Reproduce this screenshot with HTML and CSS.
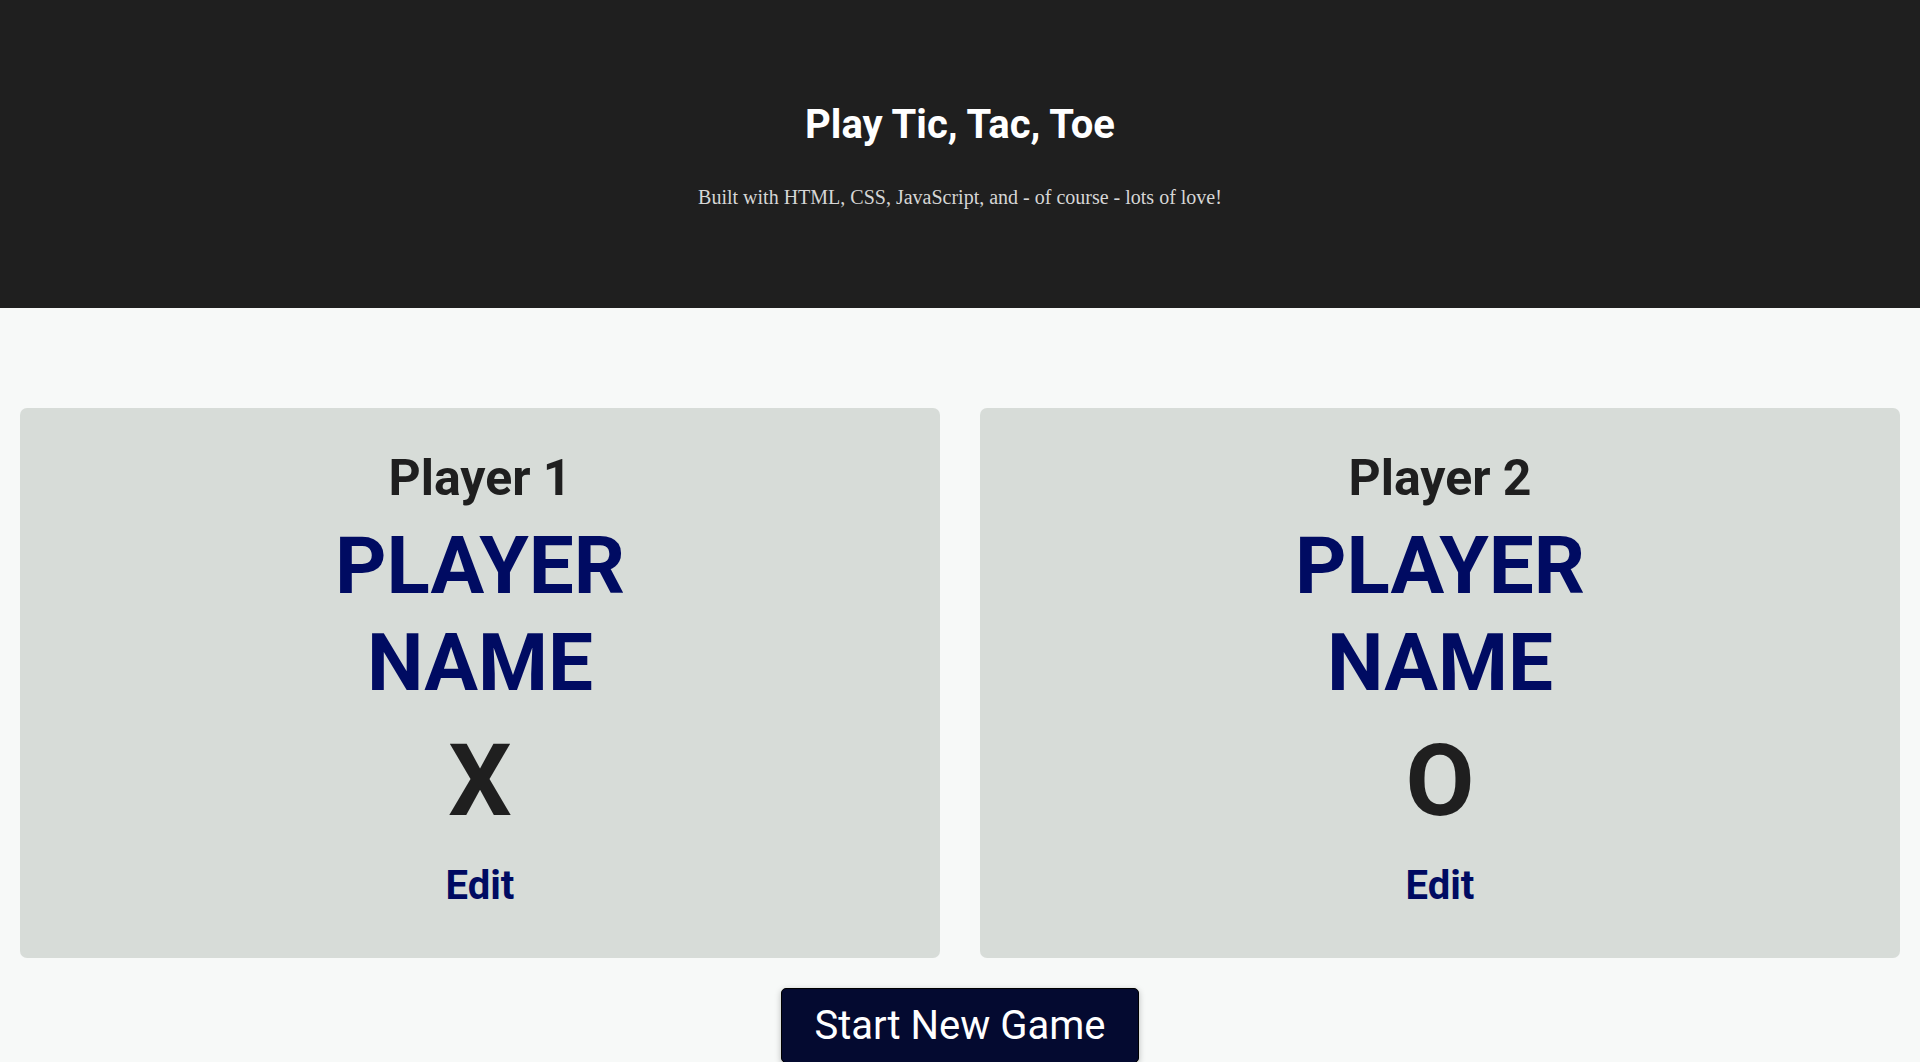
FILE: index.html
```html
<!DOCTYPE html>
<html lang="en">
<head>
<meta charset="utf-8">
<title>Tic Tac Toe</title>
<link rel="stylesheet" href="styles.css">
</head>
<body>
  <header class="main-header">
    <h1 class="title">Play Tic, Tac, Toe</h1>
    <p class="subtitle">Built with HTML, CSS, JavaScript, and - of course - lots of love!</p>
  </header>
  <main class="content">
    <section class="players">
      <article class="player-card">
        <h2 class="player-label">Player 1</h2>
        <h3 class="player-name">PLAYER NAME</h3>
        <p class="player-symbol">X</p>
        <button class="edit-btn">Edit</button>
      </article>
      <article class="player-card">
        <h2 class="player-label">Player 2</h2>
        <h3 class="player-name">PLAYER NAME</h3>
        <p class="player-symbol">O</p>
        <button class="edit-btn">Edit</button>
      </article>
    </section>
    <div class="actions">
      <button class="start-btn">Start New Game</button>
    </div>
  </main>
</body>
</html>
```

FILE: styles.css
```css
* {
  box-sizing: border-box;
}

html, body {
  margin: 0;
  padding: 0;
}

body {
  font-family: Roboto, "Liberation Sans", sans-serif;
  background: #f7f9f8;
  color: #1f1f1f;
}

.main-header {
  background: #1f1f1f;
  text-align: center;
  height: 308px;
  padding-top: 101px;
}

.title {
  margin: 0;
  font-size: 40px;
  font-weight: 700;
  line-height: normal;
  color: #ffffff;
}

.subtitle {
  margin: 38px 0 0;
  font-family: "Liberation Serif", serif;
  font-size: 20px;
  line-height: normal;
  color: #d6d6d6;
}

.content {
  padding: 100px 20px 0;
}

.players {
  display: grid;
  grid-template-columns: 1fr 1fr;
  gap: 40px;
}

.player-card {
  background: #d7dcd8;
  border-radius: 7px;
  padding: 41px 20px 49px;
  text-align: center;
  display: flex;
  flex-direction: column;
  align-items: center;
}

.player-label {
  margin: 0;
  font-size: 50px;
  font-weight: 700;
  line-height: normal;
  color: #1f1f1f;
}

.player-name {
  margin: 11px 0 0;
  font-size: 80px;
  font-weight: 700;
  line-height: 97px;
  color: #000b62;
  width: 300px;
}

.player-symbol {
  margin: 10px 0 0;
  font-size: 100px;
  font-weight: 700;
  line-height: normal;
  color: #1f1f1f;
}

.edit-btn {
  margin: 23px 0 0;
  padding: 0;
  border: none;
  background: none;
  font-family: Roboto, "Liberation Sans", sans-serif;
  font-size: 40px;
  font-weight: 700;
  line-height: normal;
  color: #000b62;
  cursor: pointer;
}

.actions {
  display: flex;
  justify-content: center;
  padding-top: 30px;
}

.start-btn {
  font-family: Roboto, "Liberation Sans", sans-serif;
  font-size: 40px;
  font-weight: 400;
  line-height: normal;
  color: #ffffff;
  background: #040a30;
  border: 1px solid #000000;
  border-radius: 5px;
  padding: 13px 32px;
  box-shadow: 0 2px 6px rgba(0, 0, 0, 0.25);
  cursor: pointer;
}
```
